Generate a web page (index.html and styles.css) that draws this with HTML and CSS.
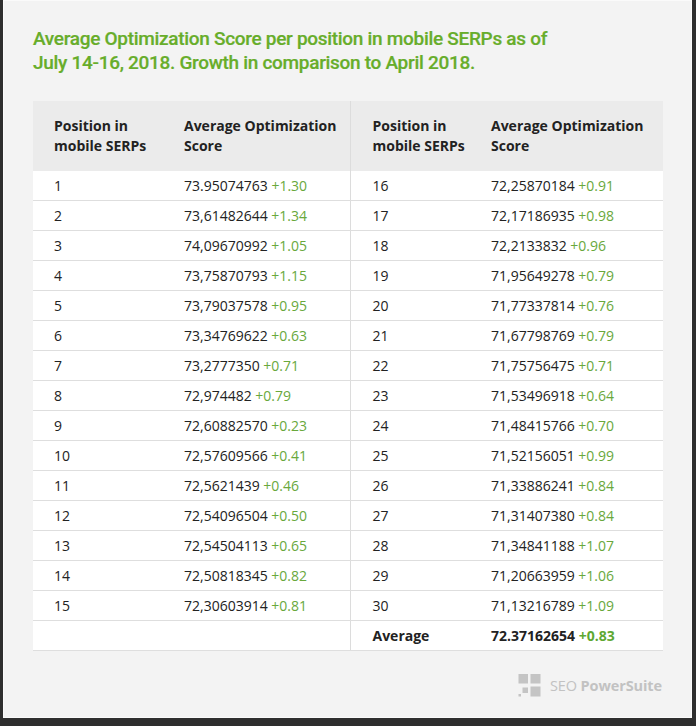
FILE: index.html
```html
<!DOCTYPE html>
<html>
<head>
<meta charset="utf-8">
<link rel="stylesheet" href="styles.css">
</head>
<body>
<div class="frame">
  <div class="panel">
    <h1 class="title">Average Optimization Score per position in mobile SERPs as of<br>July 14-16, 2018. Growth in comparison to April 2018.</h1>
    <table class="data">
      <colgroup>
        <col class="c1"><col class="c2"><col class="c3"><col class="c4">
      </colgroup>
      <thead>
        <tr>
          <th>Position in<br>mobile SERPs</th>
          <th>Average Optimization<br>Score</th>
          <th class="split">Position in<br>mobile SERPs</th>
          <th>Average Optimization<br>Score</th>
        </tr>
      </thead>
      <tbody>
        <tr><td>1</td><td>73.95074763 <span class="g">+1.30</span></td><td class="split">16</td><td>72,25870184 <span class="g">+0.91</span></td></tr>
        <tr><td>2</td><td>73,61482644 <span class="g">+1.34</span></td><td class="split">17</td><td>72,17186935 <span class="g">+0.98</span></td></tr>
        <tr><td>3</td><td>74,09670992 <span class="g">+1.05</span></td><td class="split">18</td><td>72,2133832 <span class="g">+0.96</span></td></tr>
        <tr><td>4</td><td>73,75870793 <span class="g">+1.15</span></td><td class="split">19</td><td>71,95649278 <span class="g">+0.79</span></td></tr>
        <tr><td>5</td><td>73,79037578 <span class="g">+0.95</span></td><td class="split">20</td><td>71,77337814 <span class="g">+0.76</span></td></tr>
        <tr><td>6</td><td>73,34769622 <span class="g">+0.63</span></td><td class="split">21</td><td>71,67798769 <span class="g">+0.79</span></td></tr>
        <tr><td>7</td><td>73,2777350 <span class="g">+0.71</span></td><td class="split">22</td><td>71,75756475 <span class="g">+0.71</span></td></tr>
        <tr><td>8</td><td>72,974482 <span class="g">+0.79</span></td><td class="split">23</td><td>71,53496918 <span class="g">+0.64</span></td></tr>
        <tr><td>9</td><td>72,60882570 <span class="g">+0.23</span></td><td class="split">24</td><td>71,48415766 <span class="g">+0.70</span></td></tr>
        <tr><td>10</td><td>72,57609566 <span class="g">+0.41</span></td><td class="split">25</td><td>71,52156051 <span class="g">+0.99</span></td></tr>
        <tr><td>11</td><td>72,5621439 <span class="g">+0.46</span></td><td class="split">26</td><td>71,33886241 <span class="g">+0.84</span></td></tr>
        <tr><td>12</td><td>72,54096504 <span class="g">+0.50</span></td><td class="split">27</td><td>71,31407380 <span class="g">+0.84</span></td></tr>
        <tr><td>13</td><td>72,54504113 <span class="g">+0.65</span></td><td class="split">28</td><td>71,34841188 <span class="g">+1.07</span></td></tr>
        <tr><td>14</td><td>72,50818345 <span class="g">+0.82</span></td><td class="split">29</td><td>71,20663959 <span class="g">+1.06</span></td></tr>
        <tr><td>15</td><td>72,30603914 <span class="g">+0.81</span></td><td class="split">30</td><td>71,13216789 <span class="g">+1.09</span></td></tr>
        <tr class="avg"><td></td><td></td><td class="split">Average</td><td>72.37162654 <span class="g">+0.83</span></td></tr>
      </tbody>
    </table>
    <div class="brand">
      <svg class="brand-icon" width="23" height="23" viewBox="0 0 23 23">
        <rect x="0.5" y="0" width="9.5" height="9.5" fill="#c4c4c4"/>
        <rect x="12.5" y="0" width="10" height="9.5" fill="#c4c4c4"/>
        <rect x="12.5" y="12.5" width="10" height="10" fill="#c4c4c4"/>
        <rect x="4.5" y="13.5" width="5.5" height="5.5" fill="#c4c4c4"/>
        <rect x="0.5" y="20" width="2.5" height="2.5" fill="#c4c4c4"/>
      </svg>
      <span class="brand-text">SEO <b>PowerSuite</b></span>
    </div>
  </div>
</div>
</body>
</html>
```

FILE: styles.css
```css
html, body {
  margin: 0;
  padding: 0;
  background: #3a3a3a;
}
.frame {
  width: 696px;
  height: 726px;
  background: #2e2e2e;
  box-sizing: border-box;
  padding: 0 4px 8px 3px;
}
.panel {
  height: 718px;
  background: #f3f3f3;
  border: 1px solid #fafafa;
  box-sizing: border-box;
  padding: 26px 28px 0 29px;
}
.title {
  margin: 0 0 26px 0;
  font-family: Roboto, "Liberation Sans", sans-serif;
  font-weight: 500;
  font-size: 19px;
  line-height: 24px;
  color: #67ad2a;
  letter-spacing: -0.3px;
  -webkit-text-stroke: 0.2px #67ad2a;
}
.data {
  width: 630px;
  border-collapse: collapse;
  table-layout: fixed;
  font-family: "Open Sans", "Liberation Sans", sans-serif;
  font-size: 14px;
  color: #222;
}
.c1 { width: 130px; }
.c2 { width: 187px; }
.c3 { width: 120px; }
.c4 { width: 193px; }
.data th {
  background: #ebebeb;
  height: 70px;
  text-align: left;
  font-weight: 700;
  line-height: 20px;
  padding: 0 0 0 21px;
  vertical-align: middle;
  color: #222;
}
.data td {
  background: #fff;
  height: 29px;
  padding: 0 0 0 21px;
  border-bottom: 1px solid #dedede;
  line-height: 20px;
  white-space: nowrap;
}
.data .split {
  border-left: 1px solid #dcdcdc;
  padding-left: 22px;
}
.g { color: #69a83c; }
.avg td { font-weight: 700; }
.avg .g { color: #5ea832; }
.brand {
  display: flex;
  align-items: center;
  justify-content: flex-end;
  gap: 9px;
  margin-top: 23px;
  padding-right: 1px;
}
.brand-icon { display: block; }
.brand-text {
  font-family: "Open Sans", "Liberation Sans", sans-serif;
  font-size: 14.5px;
  color: #c2c2c2;
  letter-spacing: -0.1px;
}
.brand-text b { font-weight: 700; }
```
